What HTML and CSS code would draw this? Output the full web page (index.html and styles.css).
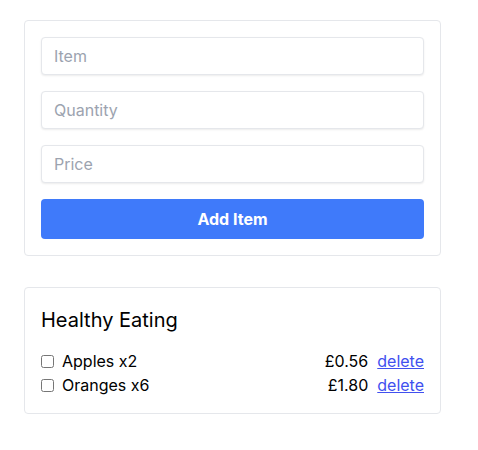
FILE: index.html
```html
<!DOCTYPE html>
<html>
<head>
<meta charset="utf-8">
<link rel="stylesheet" href="styles.css">
</head>
<body>
<div class="page">
  <form class="card form">
    <input class="field" type="text" placeholder="Item">
    <input class="field" type="text" placeholder="Quantity">
    <input class="field" type="text" placeholder="Price">
    <button class="btn" type="button">Add Item</button>
  </form>
  <div class="card list">
    <h2 class="title">Healthy Eating</h2>
    <ul class="items">
      <li class="row">
        <label class="name"><input class="check" type="checkbox">Apples x2</label>
        <span class="right"><span class="price">£0.56</span><a class="del" href="#">delete</a></span>
      </li>
      <li class="row">
        <label class="name"><input class="check" type="checkbox">Oranges x6</label>
        <span class="right"><span class="price">£1.80</span><a class="del" href="#">delete</a></span>
      </li>
    </ul>
  </div>
</div>
</body>
</html>
```
FILE: styles.css
```css
* { box-sizing: border-box; }
html, body { margin: 0; padding: 0; background: #fff; }
body {
  font-family: Inter, "Noto Sans", sans-serif;
  color: #000;
  font-size: 16px;
  line-height: 1.5;
}
.page {
  width: 417px;
  margin: 20px 0 0 24px;
  display: flex;
  flex-direction: column;
  gap: 31px;
}
.card {
  border: 1px solid #e5e7eb;
  border-radius: 4px;
  padding: 16px;
  background: #fff;
}
.form {
  display: flex;
  flex-direction: column;
  gap: 16px;
  margin: 0;
}
.field {
  height: 38px;
  border: 1px solid #e5e7eb;
  border-radius: 4px;
  box-shadow: 0 1px 2px rgba(0,0,0,0.08);
  padding: 0 12px;
  font-family: Inter, sans-serif;
  font-size: 16px;
  color: #111;
  outline: none;
}
.field::placeholder { color: #9ca3af; }
.btn {
  height: 40px;
  border: 0;
  border-radius: 4px;
  background: #3f7afa;
  color: #fff;
  font-family: Inter, sans-serif;
  font-weight: 700;
  font-size: 16px;
}
.list { padding: 16px 16px 16px; }
.title {
  margin: 0 0 15px;
  padding-top: 2px;
  font-size: 20px;
  line-height: 28px;
  font-weight: 400;
}
.items { list-style: none; margin: 0; padding: 0; }
.row {
  display: flex;
  justify-content: space-between;
  align-items: center;
  height: 24px;
}
.name { display: flex; align-items: center; }
.check {
  width: 13px;
  height: 13px;
  margin: 0 8px 0 0;
}
.right { display: flex; gap: 9px; }
.del { color: #4150ef; text-decoration: underline; }
```
